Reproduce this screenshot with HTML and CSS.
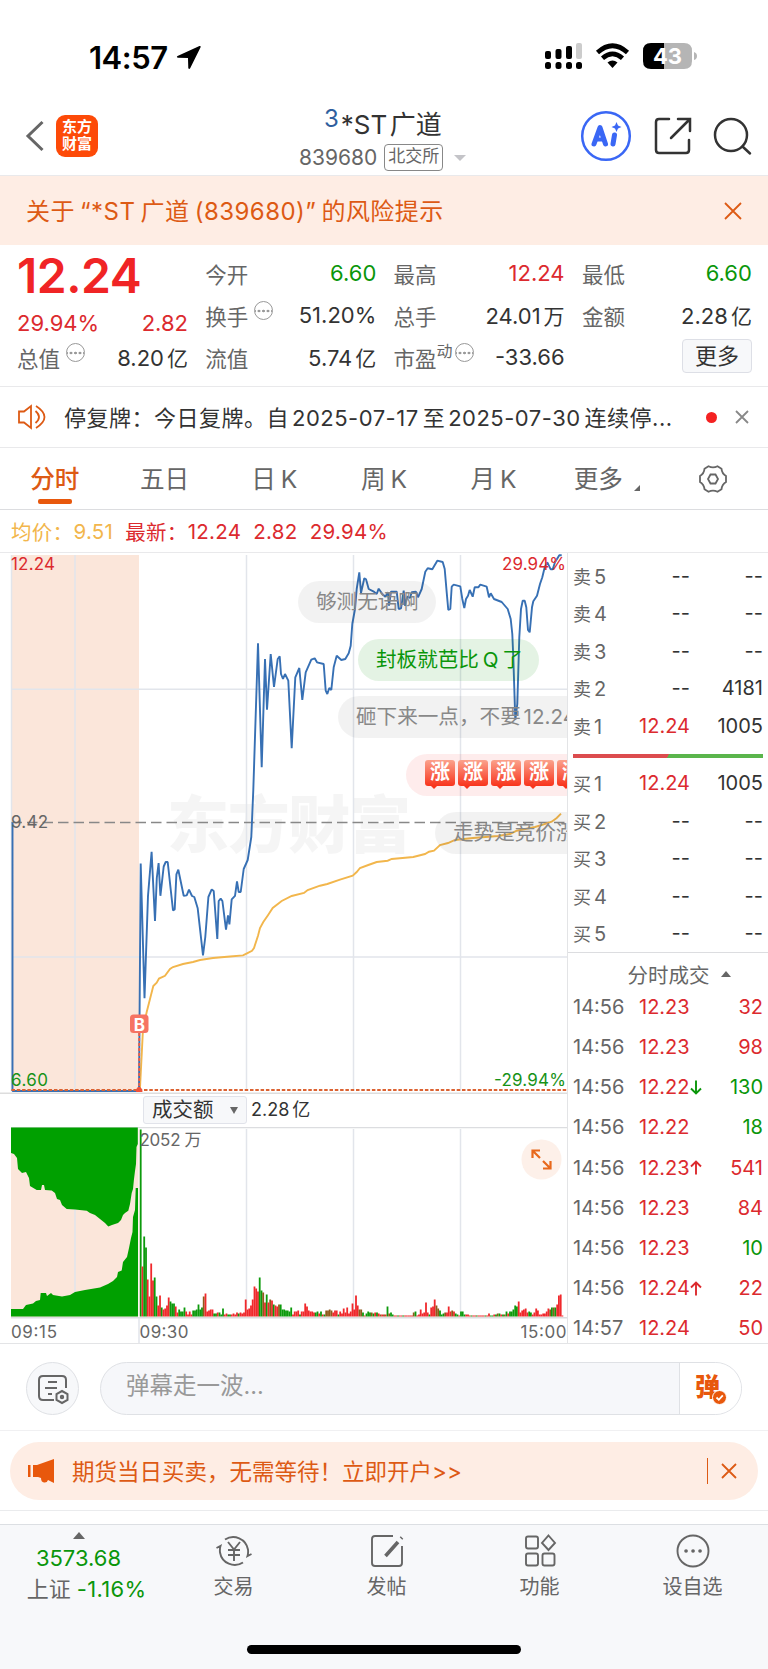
FILE: index.html
```html
<!DOCTYPE html>
<html lang="zh-CN">
<head>
  <meta charset="UTF-8"/>
  <meta name="viewport" content="width=device-width, initial-scale=1.0"/>
  <title>*ST广道 839680</title>
  <link rel="stylesheet" href="styles.css">
</head>
<body>
  <div class="statusbar">
    <span class="clock">14:57</span>
    <svg class="loc" width="25" height="25" viewBox="0 0 24 24"><path d="M22.5 1 L1.5 10.5 Q0 11.6 2 12.2 L11.5 12.5 L11.8 22 Q12.4 24 13.6 22.4 L23.6 2.2 Q24 .4 22.5 1Z"/></svg>
    <svg class="signal" width="157" height="32" viewBox="0 0 157 32">
      <rect x="1" y="9" width="6" height="8" rx="2"/><rect x="11.500" y="7" width="6" height="10" rx="2"/><rect x="22" y="4" width="6" height="13" rx="2"/><rect x="32" y="1" width="6" height="16" rx="2" fill="#ccc"/>
      <rect x="1" y="20" width="6" height="7" rx="2.500"/><rect x="11.500" y="20" width="6" height="7" rx="2.500"/><rect x="22" y="20" width="6" height="7" rx="2.500"/><rect x="32" y="20" width="6" height="7" rx="2.500"/>
      <g fill="none" stroke="#000" stroke-width="4.600"><path d="M53.500 10.500 Q68.500 -3 83.500 10.500"/><path d="M58.500 16.300 Q68.500 7.500 78.500 16.300"/></g>
      <path d="M63.500 20.500 Q68.500 16.500 73.500 20.500 L68.500 26Z"/>
      <path d="M107 1h13v26h-13q-8 0-8-8V9q0-8 8-8z"/><path d="M120 1h20q8 0 8 8v10q0 8-8 8h-20z" fill="#b5b5b5"/><path d="M150 10q3 1 3 4t-3 4z" fill="#b5b5b5"/>
      <text x="123.500" y="22" text-anchor="middle" class="batt">43</text>
    </svg>
  </div>

  <div class="navbar">
    <svg class="back" width="20" height="32" viewBox="0 0 20 32"><path d="M17.500 2 L3 16 L17.500 30"/></svg>
    <div class="logo">东方<br>财富</div>
    <div class="title">
      <div class="name"><sup>3</sup>*ST <b>广道</b></div>
      <div class="code">839680<span class="market">北交所</span><i class="caret"></i></div>
    </div>
    <svg class="actions" width="176" height="52" viewBox="0 0 176 52">
      <circle cx="26" cy="26" r="23.800" fill="none" stroke="#3a67f5" stroke-width="2.500"/>
      <g fill="none" stroke="#3a67f5" stroke-width="5" stroke-linecap="round" stroke-linejoin="round"><path d="M14 34 L20 17.500 L25.500 34"/><path d="M17.500 29.500h6" stroke-width="4"/><path d="M34.500 25 L33 34"/></g>
      <path d="M36.500 12 L38 15.500 L41.500 17 L38 18.500 L36.500 22 L35 18.500 L31.500 17 L35 15.500Z" fill="#3a67f5"/>
      <g fill="none" stroke="#333" stroke-width="2.500" stroke-linecap="round"><path d="M89 9h-10q-3 0-3 3v28q0 3 3 3h27q3 0 3-3V30"/><path d="M91 28 L109 10 M98 9h12v12"/><circle cx="151" cy="25" r="16"/><path d="M162.500 36.500 L170 43.500"/></g>
    </svg>
  </div>

  <div class="risk">
    <span>关于 “*ST 广道 (839680)” 的风险提示</span>
    <svg width="20" height="20" viewBox="0 0 20 20"><path d="M2 2 L18 18 M18 2 L2 18"/></svg>
  </div>

  <div class="stats">
    <div class="col first">
      <div class="price">12.24</div>
      <div class="row red sub"><span>29.94%</span><span>2.82</span></div>
      <div class="row"><label>总值<i class="tip"></i></label><span>8.20<em>亿</em></span></div>
    </div>
    <div class="col">
      <div class="row"><label>今开</label><span class="green">6.60</span></div>
      <div class="row"><label>换手<i class="tip"></i></label><span>51.20%</span></div>
      <div class="row"><label>流值</label><span>5.74<em>亿</em></span></div>
    </div>
    <div class="col">
      <div class="row"><label>最高</label><span class="red">12.24</span></div>
      <div class="row"><label>总手</label><span>24.01<em>万</em></span></div>
      <div class="row"><label>市盈<small>动</small><i class="tip near"></i></label><span>-33.66</span></div>
    </div>
    <div class="col">
      <div class="row"><label>最低</label><span class="green">6.60</span></div>
      <div class="row"><label>金额</label><span>2.28<em>亿</em></span></div>
      <div class="row end"><button class="more">更多</button></div>
    </div>
  </div>

  <div class="notice">
    <svg width="32" height="26" viewBox="0 0 32 26"><path d="M2 7.500h5L14 2v22l-7-5.500H2zM18.500 7q7 6 0 12M19 2q17 11 0 22"/></svg>
    <span class="msg">停复牌：今日复牌。自<u>2025-07-17</u>至<u>2025-07-30</u>连续停...</span>
    <i class="dot"></i>
    <svg width="16" height="16" viewBox="0 0 16 16"><path class="grey" d="M2 2 L14 14 M14 2 L2 14"/></svg>
  </div>

  <div class="tabs">
    <span class="on">分时</span><span>五日</span><span>日 K</span><span>周 K</span><span>月 K</span><span class="drop">更多</span>
    <span><svg width="30" height="30" viewBox="0 0 30 30"><path d="M10.500 2.200 Q15 4.500 19.500 2.200 L23.500 4.800 Q24 9.500 28 12 L28 18 Q24 20.500 23.500 25.200 L19.500 27.800 Q15 25.500 10.500 27.800 L6.500 25.200 Q6 20.500 2 18 L2 12 Q6 9.500 6.500 4.800Z"/><path d="M12.500 10.500h5l2.500 4.500-2.500 4.500h-5L10 15z"/></svg></span>
  </div>

  <div class="legend"><span class="avg">均价：</span><span class="avg v">9.51</span><span>最新：</span><span class="v">12.24</span><span class="v">2.82</span><span>29.94%</span></div>

  <div class="main">
    <div class="charts">
      <!-- price -->
      <svg class="plot" width="568" height="541" viewBox="0 554 568 541">
        <rect x="11" y="556" width="128" height="536" fill="#fbe6da"/>
        <text x="167" y="849" class="wm" textLength="244">东方财富</text>
        <g stroke="#e2e5eb" stroke-width="1.500"><path d="M11.500 556V1092M75 556V1092M246.500 556V1092M353.500 556V1092M460.500 556V1092M11 690.300H568M11 958H568"/><path d="M0 1094.300H568" stroke="#ddd"/></g>
        <path d="M11.500 823.500H568" stroke="#888" stroke-width="1.500" stroke-dasharray="10.500 5"/>
        <path class="avgline" d="M140 1089L143 1030 146.700 1013 150 1000 153.300 987 156.700 983.600 159 979.600 165 976.800 170 970 173 968 183 965 193 963 200 961 213 959 230 957.500 243 956.400 247 954.300 252 951.800 254 949 258 936.700 260 929 263.300 923 268.300 915.700 272.700 909 281.700 902 291.700 897 304 894 307.700 891 320 886.700 327.300 885 340 880.700 352.700 876.700 356.700 873 360 869 368.300 866 376.700 863 387.700 861.700 391.700 860 413.300 858 425 855 429 852.700 434 851.700 440 846 448 844 455 841 473 839 498 837 510 835 516.700 831.700 535 828 543 825.700 551.700 822.700 556.700 819 561 814.700"/>
        <path class="line" d="M12.500 823.500V1092H139L140.700 864.600 144.500 999.300 148 896.800 151.600 852.900 155 922 156.800 879 158.600 864 160.400 896.800 163.700 867.500 165.700 863 167.700 863 173 911.400 174.700 910.400 176.400 875.400 178.300 870.700 183.700 896.800 186.700 896.400 189 890.700 192 897 194.300 898 197.700 909.300 203 956.400 205.300 938 208.400 898 211.700 890.400 213.700 892 217.300 940 218.700 902 220.700 899.600 222.400 902 226 930.700 228 916.400 229.400 925.400 231.700 900.400 235 896.800 237 882.500 238.700 893 240.700 893 243.700 870 247.700 861 251.300 838 253.300 791 258 644.300 261.700 768.300 265 660 267 710.700 270.700 655 274 688 277.700 660 279.700 657.300 281 675 283 680 285 675 288.300 681.700 291.700 749.300 295.300 678.300 299.300 669 302.300 701 305.700 673.300 311.300 660.700 314.700 659.300 317 663.300 323.700 665 325.700 691.700 327.300 695 329.300 689 331.300 691 333.700 668.300 336.700 656.700 341.300 661 345.300 660 348.700 654.300 350.700 646.700 352.300 625 355 610 356.700 590 359.300 573.300 361 594 364.300 579.300 366 580.300 368.700 590 373.300 592.300 376.700 595 378.700 589.700 382.300 595 385.300 597.700 388 593.300 389 606.700 391 592.700 396.700 592.700 398.700 610 401 609.300 403.700 591.700 405 606.700 407.300 597.700 410 599 411.700 593.300 416 592.700 418 598.300 421.700 590 425.300 572.700 427.700 569.300 432.300 570.300 437.300 561.700 442.700 563 444.700 570 446.700 593.300 448.300 611 450.300 610 451.700 587.700 453.700 585.700 460.300 587.300 462.300 600 464.300 609 466 600 468 596.700 469.700 591 472.700 597.700 474.700 588.300 478.300 588.300 480.300 585.700 486.700 587.700 489 598.300 490.700 594.300 494 600 501.700 603 507.700 610 510.700 620 512.300 635 513.300 658.300 515.300 721 517.300 705 519.300 638.300 521 610 522.700 601.700 524.700 601.700 526.300 608.300 528 631 529.700 633.300 532 608.300 533.300 602.300 537 596.700 540 585 542.300 578.300 544.700 568.300 547.300 563.300 550.700 570.300 552.700 570.300 555 563.300 559.300 556.300 561.700 556.300"/>
        <path d="M11.500 1091H568" stroke="#dc6332" stroke-width="2" stroke-dasharray="3.500 1.800"/>
        <path d="M139.200 1034V1089" stroke="#ee5a45" stroke-width="1.800" stroke-dasharray="3 2"/>
        <path d="M136 1093Q136 1088 139 1088T142.500 1093Z" fill="#f0503c"/>
        <rect x="130" y="1015.500" width="18.500" height="18.500" rx="3.500" fill="#f67362"/>
        <text x="139.300" y="1031.500" text-anchor="middle" class="buy">B</text>
        <g class="tick"><text x="11" y="570.500" fill="#dc2a2e" textLength="44">12.24</text><text x="11" y="828.500" fill="#666" textLength="37">9.42</text><text x="11" y="1086.500" fill="#179217" textLength="37">6.60</text><text x="502" y="570.500" fill="#dc2a2e" textLength="64">29.94%</text><text x="494" y="1086.500" fill="#179217" textLength="72">-29.94%</text></g>
      </svg>
      <div class="danmaku">
        <span class="bub b1">够测无语啊</span>
        <span class="bub b2">封板就芭比 Q 了</span>
        <span class="bub b3">砸下来一点，不要 12.24</span>
        <span class="bub b4"><i>涨</i><i>涨</i><i>涨</i><i>涨</i><i>涨</i></span>
        <span class="bub b5">走势是竞价涨</span>
      </div>
      <div class="volbar"><span class="sel">成交额<i></i></span><span>2.28 亿</span></div>
      <!-- volume -->
      <svg class="plot" width="568" height="217" viewBox="0 1128 568 217">
        <rect x="11" y="1129" width="127" height="189" fill="#fbe6da"/>
        <g stroke="#e2e5eb" stroke-width="1.500"><path d="M75 1130V1317M246.500 1130V1317M353.500 1130V1317M460.500 1130V1317M139 1318V1344"/><path d="M11 1128.500H568M11 1318.800H568" stroke="#dcdde0"/></g>
        <g fill="#00a000"><path d="M11 1128.500H137.800V1145L136.500 1148 136 1165 135 1172 134 1180 133 1190 131.700 1194 130 1205 128.300 1211.700 125 1214 123 1216 121 1221 118 1224 115 1225 112 1226 108.300 1227.500 105 1224 100 1220 95 1216 90 1214 86.700 1211.700 75 1210.500 66.700 1210 62 1206 60 1201 57 1200 55 1194 51.700 1191.500 45 1191 44 1186 42 1186 41 1191 36.700 1191 30 1187 29 1179 26 1173 22 1174 18 1170 17 1159 14 1155 11 1154Z"/><path d="M11 1317.500V1310H23L26 1306 33 1304.500 36 1302 40 1301 40.700 1294H46L47 1297 51 1294 53 1296 62 1297.500 70 1296 75 1293 85 1291 100 1288.500 108 1285 113 1282 117 1278 118 1273 121.700 1271.500 123 1263 127 1258 129 1249 131 1239 132.500 1233 133 1218 135 1211 135.700 1189H138V1317.500Z"/></g>
        <path d="M139 1130V1317.500" stroke="#fbe6da"/>
        <g id="vol"></g>
        <g class="tick"><text x="139.500" y="1147" fill="#666" textLength="41">2052</text><text x="184.500" y="1147" fill="#666">万</text></g>
        <circle cx="541.500" cy="1160.500" r="20" fill="#fdf0e9"/>
        <path class="expand" d="M532.500 1159V1151.500H540M533 1152L540 1159M550.500 1162V1169.500H543M550 1169L543 1162"/>
        <g class="tick axis"><text x="11" y="1339" textLength="46">09:15</text><text x="139.500" y="1339" textLength="49">09:30</text><text x="520.500" y="1339" textLength="46">15:00</text></g>
      </svg>
    </div>
    <div class="side">
      <div class="book">
        <div><label>卖<b>5</b></label><span>--</span><span>--</span></div>
        <div><label>卖<b>4</b></label><span>--</span><span>--</span></div>
        <div><label>卖<b>3</b></label><span>--</span><span>--</span></div>
        <div><label>卖<b>2</b></label><span>--</span><span>4181</span></div>
        <div><label>卖<b>1</b></label><span class="red">12.24</span><span>1005</span></div>
      </div>
      <div class="ratio"></div>
      <div class="book">
        <div><label>买<b>1</b></label><span class="red">12.24</span><span>1005</span></div>
        <div><label>买<b>2</b></label><span>--</span><span>--</span></div>
        <div><label>买<b>3</b></label><span>--</span><span>--</span></div>
        <div><label>买<b>4</b></label><span>--</span><span>--</span></div>
        <div><label>买<b>5</b></label><span>--</span><span>--</span></div>
      </div>
      <div class="dealhead">分时成交<i></i></div>
      <div class="deals" id="deals"></div>
    </div>
  </div>

  <div class="chat">
    <span class="round"><svg width="34" height="34" viewBox="0 0 34 34"><path d="M18 28H7q-4 0-4-4V8q0-4 4-4h19q4 0 4 4v8M12 10h9M9 16h12M12 22h4"/><path d="M26 19l5.500 3v6L26 31l-5.500-3v-6z"/><circle cx="26" cy="25" r="1.200"/></svg></span>
    <div class="field"><span>弹幕走一波...</span><div class="send">弹<svg width="15" height="15" viewBox="0 0 15 15"><circle cx="7.500" cy="7.500" r="7" fill="#e8580c" stroke="#fff"/><path d="M4.500 7.500l2.300 2.300 4-4.500" fill="none" stroke="#fff" stroke-width="1.800"/></svg></div></div>
  </div>

  <div class="adwrap"><div class="ad">
    <svg width="28" height="24" viewBox="0 0 28 24"><path d="M0 6h2.500v12H0zM5 6h4L26 0v24l-6-3q-1 3-4 2.500T13 19l-3-1H5z" fill="#e8580c"/></svg>
    <span>期货当日买卖，无需等待！立即开户&gt;&gt;</span>
    <i></i>
    <svg width="16" height="16" viewBox="0 0 16 16"><path d="M1 1 L15 15 M15 1 L1 15" stroke="#dd5a14" stroke-width="1.800"/></svg>
  </div></div>

  <div class="bottom">
    <div class="index"><i></i><span>3573.68</span><p>上证 <b>-1.16%</b></p></div>
    <div><svg width="38" height="34" viewBox="0 0 38 34"><path d="M10 5.500a15 15 0 0 1 23 10c.3 3 0 5-.5 6.500l4-2M28 28.500a15 15 0 0 1-23-10c-.3-3 0-5 .5-6.500l-4 2M13 8l6 7.500L25 8M19 15.500V27M13 16h12M13 21h12"/></svg>交易</div>
    <div><svg width="36" height="34" viewBox="0 0 36 34"><path d="M24 2H6Q3 2 3 5v24q0 3 3 3h24q3 0 3-3V12"/><path class="pen" d="M29 8L16.500 22M32 4.500l1-1"/></svg>发帖</div>
    <div><svg width="34" height="34" viewBox="0 0 34 34"><rect x="3" y="2.500" width="12" height="12" rx="2"/><rect x="3" y="19.500" width="12" height="12" rx="2"/><rect x="19.500" y="19.500" width="12" height="12" rx="2"/><path d="M25.500 1.500l6.500 7.500-6.500 7-6.500-7z"/></svg>功能</div>
    <div><svg width="36" height="34" viewBox="0 0 36 34"><circle cx="18" cy="17" r="15.500"/><path class="dots" d="M11 17h.1M18 17h.1M25 17h.1"/></svg>设自选</div>
    <div class="home"></div>
  </div>

  <script>
    // volume bars: colour letter + height in px, one per minute
    const vol = "g187 r50 g80 g69 r37 r20 r53 r36 g39 g20 r11 r21 g9 r7 r8 r11 r19 g15 g13 g13 r10 r4 g7 g5 g5 g9 r5 r2 r5 r2 g6 g6 g7 g12 g7 g9 b20 r23 r5 r6 r7 r7 g3 g3 r4 g4 g2 g8 r2 r3 g2 g2 r2 r3 r2 r4 g3 r4 r3 r4 r17 r7 r8 r11 r17 r30 r28 r25 g39 g26 b24 r14 g22 r14 b17 r16 g12 r11 r10 b12 g12 g7 g7 g6 g6 g5 g9 r2 r5 r5 r6 g2 r5 r5 r13 r10 r6 r5 r5 r4 g4 g5 r3 g5 r2 g2 b6 b6 b7 b6 r4 r6 r6 g2 r5 r3 r8 r4 r9 r3 r5 r13 r7 r21 r11 b7 b7 g4 r1 g3 g5 g4 b4 g3 r4 g4 r3 b2 r2 b2 r2 g10 b3 g4 g2 r1 r1 g1 r1 r1 g1 r1 r1 r1 r1 r1 b4 g5 r1 r2 r7 r3 r4 r14 r4 g2 r9 r10 r17 b11 b8 g6 g2 g3 b4 r4 r10 r5 b6 r5 g3 g2 r1 g5 g5 g2 r2 r2 r1 g1 r1 r1 g1 r1 r1 r1 r1 g1 r1 r3 g1 g1 r2 g2 b3 g3 r2 g2 b2 g5 r3 g5 g5 g7 g11 g10 r15 r4 r6 r7 r8 r4 g5 g4 r2 r4 r8 r6 r2 r2 r3 r3 r5 r8 b7 g9 b9 g9 r12 r21 r22 r1".split(" ");
    const cols = { g:"#0c9a0c", r:"#f0282c", b:"#8f5a1c" };
    const x0 = 139.8, step = 423.500 / vol.length;
    document.getElementById("vol").innerHTML = vol.map((v, i) => {
      const h = +v.slice(1);
      return `<rect x="${(x0 + i * step).toFixed(1)}" y="${1317.500 - h}" width="1.800" height="${h}" fill="${cols[v[0]]}"/>`;
    }).join("");

    const deals = [
      ["14:56", "12.23", "", 32, "red"], ["14:56", "12.23", "", 98, "red"], ["14:56", "12.22", "down", 130, "green"],
      ["14:56", "12.22", "", 18, "green"], ["14:56", "12.23", "up", 541, "red"], ["14:56", "12.23", "", 84, "red"],
      ["14:56", "12.23", "", 10, "green"], ["14:56", "12.24", "up", 22, "red"], ["14:57", "12.24", "", 50, "red"]
    ];
    const arrows = {
      up: '<svg width="12" height="15" viewBox="0 0 12 15"><path stroke="#dc2a2e" d="M6 14.500V1.500M1 6.500L6 1.500 11 6.500"/></svg>',
      down: '<svg width="12" height="15" viewBox="0 0 12 15"><path stroke="#0a960a" d="M6 .5V13.500M1 8.500L6 13.500 11 8.500"/></svg>'
    };
    document.getElementById("deals").innerHTML = deals.map(([t, p, a, n, c]) =>
      `<div><label>${t}</label><span class="red">${p}${arrows[a] || ""}</span><span class="${c}">${n}</span></div>`).join("");
  </script>
</body>
</html>
```
FILE: styles.css
```css
* { box-sizing:border-box; }
html { height:1669px; overflow:hidden; }
body { margin:0; width:768px; height:1669px; background:#fff; color:#333; font-family:Inter,"Noto Sans CJK SC",sans-serif; overflow:hidden; }
svg { display:block; flex:none; }
i, em, u { font-style:normal; text-decoration:none; }
.red { color:#dc2a2e; }
.green { color:#0a960a; }

.statusbar { height:96px; display:flex; align-items:center; padding:19px 70px 0 89px; }
.clock { font-size:31px; font-weight:600; color:#000; letter-spacing:-.5px; line-height:40px; }
.loc { margin-left:8px; }
.signal { margin-left:auto; margin-right:-3px; }
.batt { font-size:22px; font-weight:700; fill:#fff; }

.navbar { height:80px; display:flex; align-items:center; padding:1px 12px 0 25px; border-bottom:1px solid #e9e9eb; }
.back path { fill:none; stroke:#666; stroke-width:3; }
.logo { width:42px; height:42px; margin-left:11px; border-radius:9px; background:#fd4a08; color:#fff; font-size:15px; line-height:17px; font-weight:700; text-align:center; padding-top:3px; }
.title { margin-left:201px; width:170px; padding-top:9px; }
.name { font-size:26px; line-height:34px; padding-left:25px; white-space:nowrap; word-spacing:-5px; }
.name b { font-weight:400; }
.name sup { font-size:24px; color:#2f5f9e; line-height:0; vertical-align:7px; margin-right:2px; }
.code { display:flex; align-items:center; height:32px; font-size:21px; color:#666; }
.market { border:1.5px solid #888; border-radius:4px; font-size:17px; line-height:23px; padding:0 3px; margin-left:7px; height:27px; }
.caret { border:6px solid transparent; border-top-color:#c4c4c8; border-bottom:0; margin-left:11px; }
.actions { margin-left:auto; }

.risk { height:69px; background:#feede4; color:#dd5a14; display:flex; align-items:center; justify-content:space-between; padding:0 25px 2px 26px; font-size:24px; letter-spacing:.45px; word-spacing:-2px; }
.risk svg { position:relative; top:1px; }
.risk path, .notice path { fill:none; stroke:#dd5a14; stroke-width:1.8; }

.stats { height:142px; display:grid; grid-template-columns:171px 171px 171px 170px; column-gap:17.3px; padding:7px 16px 0 17px; border-bottom:1.5px solid #e9e9eb; font-size:22px; }
.row { display:flex; justify-content:space-between; align-items:center; height:42px; white-space:nowrap; }
.row label { color:#666; display:flex; align-items:center; font-size:21.5px; }
.row em { margin-left:3px; font-size:21px; }
.row small { font-size:16px; margin-top:-14px; }
.row.sub { height:30px; padding-top:3px; }
.row.end { justify-content:flex-end; }
.price { height:54px; line-height:48px; font-size:48px; font-weight:600; color:#f02425; letter-spacing:-.5px; }
.tip { width:19px; height:19px; border:1.5px solid #999; border-radius:50%; margin:-9px 0 0 6px; background:radial-gradient(circle,#999 1.2px,transparent 1.6px) center/4.5px 4px repeat-x; }
.tip.near { margin-left:2px; }
.more { width:70px; height:34px; border:1.5px solid #dddfe6; border-radius:4px; background:#f7f8fa; color:#333; font:inherit; font-size:22px; line-height:30px; padding:0; margin-top:-3px; }

.notice { height:61px; display:flex; align-items:center; padding:0 16px 0 17px; border-bottom:1.5px solid #e9e9eb; font-size:22px; white-space:nowrap; }
.msg { width:605px; margin:-2px 0 0 15px; letter-spacing:.5px; }
.msg u { margin:0 4px 0 3px; }
.dot { width:11px; height:11px; border-radius:50%; background:#f42222; margin:0 17px 0 37px; }
.notice .grey { stroke:#888; }

.tabs { height:62px; display:flex; border-bottom:1.5px solid #dcdde0; font-size:24.6px; line-height:62px; color:#666; }
.tabs span { width:109.7px; text-align:center; position:relative; word-spacing:-2px; }
.tabs .on { color:#dd5a14; font-weight:500; }
.tabs .on::after { content:""; position:absolute; left:38px; bottom:5px; width:34px; height:5px; border-radius:2px; background:#e8580c; }
.tabs .drop { padding-right:10px; }
.tabs .drop::after { content:""; position:absolute; right:18px; bottom:18px; border:3.5px solid #666; border-top-color:transparent; border-left-color:transparent; }
.tabs svg { margin:16px auto 0; }
.tabs path { fill:none; stroke:#666; stroke-width:1.8; }

.legend { height:43px; display:flex; align-items:center; padding-left:11px; font-size:20.5px; letter-spacing:.3px; color:#dc2a2e; border-bottom:1px solid #e9e9eb; white-space:nowrap; }
.legend .avg { color:#f2b64c; }
.legend .v { margin-right:12px; }

.main { display:flex; height:791px; border-bottom:1.5px solid #e3e4e6; }
.charts { width:568px; position:relative; overflow:hidden; border-right:1.5px solid #e3e4e6; }
.line { fill:none; stroke:#3770b4; stroke-width:1.9; stroke-linejoin:bevel; }
.avgline { fill:none; stroke:#f2b64c; stroke-width:1.9; }
.tick { font-size:17px; }
.axis { fill:#666; }
.wm { font-size:62px; font-weight:900; fill:#000; opacity:.035; }
.buy { font-size:17px; font-weight:700; fill:#fff; }
.expand { fill:none; stroke:#e8681c; stroke-width:2.2; }
.danmaku { position:absolute; left:0; top:1px; width:567px; height:500px; overflow:hidden; }
.bub { position:absolute; height:42px; line-height:41px; border-radius:21px; background:rgba(0,0,0,.05); color:#888; font-size:20.6px; padding:0 18px; white-space:nowrap; }
.b1 { left:298px; top:27px; width:138px; }
.b2 { left:358px; top:85px; width:181px; color:#0a960a; background:rgba(10,150,10,.11); word-spacing:-2px; }
.b3 { left:338px; top:142px; width:260px; word-spacing:-3px; }
.b4 { left:406px; top:200px; width:200px; background:rgba(240,40,40,.09); display:flex; gap:3px; padding-left:19px; }
.b5 { left:435px; top:257.5px; width:200px; }
.b4 i { flex:none; width:30px; height:26px; margin-top:6px; border-radius:3px; background:linear-gradient(#fba28c,#f8341c); color:#fff; font-size:20px; line-height:24px; font-weight:700; text-align:center; position:relative; }
.b4 i::after { content:""; position:absolute; left:6px; top:26px; border:3px solid transparent; border-top-color:#f8341c; }
.volbar { height:33px; display:flex; padding:2px 0 0 143px; font-size:18px; line-height:27px; word-spacing:-2px; }
.sel { width:104px; height:28px; border:1.5px solid #e1e3ea; border-radius:3px; background:#f7f8fa; font-size:20.5px; line-height:26px; padding-left:8px; margin-right:4px; display:flex; align-items:center; }
.sel i { border:4px solid transparent; border-top:7px solid #666; border-bottom:0; margin-left:16px; }

.side { width:200px; padding:0 5px; font-size:20px; }
.book div { display:flex; height:37.5px; align-items:center; }
.book label { color:#666; width:50px; font-size:18px; white-space:nowrap; }
.book b { font-weight:400; font-size:20px; margin-left:3px; }
.book span:nth-child(2) { width:67px; text-align:right; }
.book span:nth-child(3) { flex:1; text-align:right; }
.book:first-child { padding-top:4px; }
.ratio { height:4px; margin:9px 0 7px; background:linear-gradient(120deg,#dc4c4e 50%,#5ab54c 50%); }
.dealhead { height:43px; margin:0 -5px; padding-left:22px; border-top:1.5px solid #dcdde0; display:flex; align-items:center; justify-content:center; font-size:20.5px; color:#666; }
.dealhead i { border:5px solid transparent; border-bottom:6px solid #666; border-top:0; margin-left:11px; }
.deals { margin-top:-8px; }
.deals div { display:flex; align-items:center; height:40.15px; }
.deals label { width:66px; color:#666; }
.deals span { display:flex; align-items:center; }
.deals span:last-child { margin-left:auto; }
.deals path { fill:none; stroke-width:1.9; }

.chat { height:87px; display:flex; padding:18px 26px 0; border-bottom:1px solid #f0f0f2; }
.round { width:53px; height:53px; border:1.5px solid #dfe1e5; border-radius:50%; background:#f7f8fa; display:grid; place-items:center; }
.round svg { fill:none; stroke:#666; stroke-width:2; }
.field { width:642px; height:53px; margin-left:21px; border:1.5px solid #dfe1e5; border-radius:27px; background:#f6f7fa; overflow:hidden; display:flex; justify-content:space-between; padding-left:25px; font-size:23.5px; line-height:45px; color:#999; }
.send { width:62px; background:#fff; border-left:1.5px solid #dfe1e5; color:#e8580c; font-size:25px; font-weight:900; line-height:49px; padding-left:15px; position:relative; }
.send svg { position:absolute; left:32px; top:27px; }

.adwrap { height:80px; padding:11px 10px 0; border-bottom:1.5px solid #eaebed; }
.ad { height:58px; border-radius:29px; background:#feede4; color:#dd5a14; display:flex; align-items:center; padding:0 21px 0 18px; font-size:22.5px; }
.ad span { margin:-2px 0 0 16px; }
.ad i { width:1.5px; height:26px; background:#dd5a14; margin:0 13px 0 auto; }

.bottom { margin-top:13px; height:145px; background:#f7f8fa; border-top:1.5px solid #dcdfe3; display:grid; grid-template-columns:157px repeat(4,153px); position:relative; font-size:20px; color:#666; text-align:center; line-height:26px; }
.bottom svg { margin:9px auto 6px; fill:none; stroke:#666; stroke-width:1.9; }
.bottom .pen { stroke-width:3.6; }
.bottom .dots { stroke-width:3.6; stroke-linecap:round; }
.index { font-size:22px; white-space:nowrap; }
.index i { display:block; width:0; margin:7px auto 6px; border:6px solid transparent; border-bottom:7px solid #666; border-top:0; }
.index span, .index b { color:#0a960a; font-weight:400; }
.index b { letter-spacing:.3px; }
.index p { margin:5px 0 0 16px; }
.home { position:absolute; left:247px; top:120px; width:274px; height:9px; border-radius:5px; background:#000; }
```
